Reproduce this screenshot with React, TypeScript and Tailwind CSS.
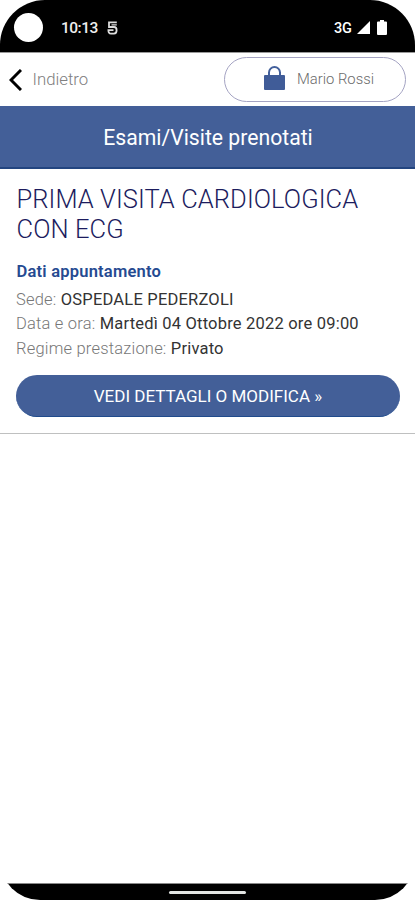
import React from 'react'

const StatusBar = () => (
  <div className="flex h-[52px] shrink-0 items-center bg-black pl-[14px] pr-[28px] pt-[3px] text-white">
    <div className="size-[29px] rounded-full bg-white"></div>
    <span className="ml-[18px] mt-[3px] text-[15.5px] font-medium tracking-[-0.5px] text-[#eee]">10:13</span>
    <svg className="ml-[9px] mt-px" width="11" height="14" viewBox="0 0 11 14" fill="none" stroke="#dcdcdc" strokeWidth="1.8">
      <path d="M9.8 1.4H2V6H7C8.8 6 9.6 7.4 9.6 9.3S8.8 12.6 7 12.6H4C2.2 12.6 1.4 11.4 1.4 9.2H6.5" />
      <path d="M4.5 3.8H9.8" strokeWidth="1.2" />
    </svg>
    <span className="ml-auto mt-[2px] text-[14.5px] font-medium">3G</span>
    <svg className="ml-[5px]" width="13" height="13" viewBox="0 0 13 13" fill="#fff">
      <path d="M13 0V13H0Z" />
    </svg>
    <svg className="ml-[7px]" width="10" height="15" viewBox="0 0 10 15" fill="#fff">
      <path d="M3 0H7V1.5H9A1 1 0 0 1 10 2.5V14A1 1 0 0 1 9 15H1A1 1 0 0 1 0 14V2.5A1 1 0 0 1 1 1.5H3Z" />
    </svg>
  </div>
)

const Navbar = () => (
  <header className="flex h-[54px] shrink-0 items-center justify-between border-t border-[#999] pl-[9px] pr-[9px]">
    <button className="flex items-center text-[#808080]">
      <svg width="13" height="22" viewBox="0 0 13 22" fill="none" stroke="#000" strokeWidth="3">
        <path d="M12 1L2 11L12 21" />
      </svg>
      <span className="ml-[10.5px] text-[16.8px] font-light">Indietro</span>
    </button>
    <button className="flex h-[45px] w-[182px] items-center rounded-full border border-[#a4a3c2] pl-[39px] text-[#6b6b6b]">
      <svg className="mb-[3px]" width="21" height="24" viewBox="0 0 21 24">
        <path d="M5 11V6.5A5.5 5.5 0 0 1 16 6.5V11" fill="none" stroke="#43609c" strokeWidth="2" />
        <rect y="9" width="21" height="15" rx="1" fill="#405c98" />
      </svg>
      <span className="ml-[12px] text-[14.8px] font-light">Mario Rossi</span>
    </button>
  </header>
)

const Appointment = () => (
  <article className="border-b border-[#bfc0c0] pl-4 pr-[15px] pb-4 pt-4">
    <h2 className="pl-[0.5px] text-[25.5px] leading-[29.5px] tracking-[0.08px] text-[#1c1c5e] font-light">
      PRIMA VISITA CARDIOLOGICA CON ECG
    </h2>
    <h3 className="mt-[16px] pl-[0.5px] text-[16.5px] leading-6 tracking-[0.22px] font-semibold text-[#254a91]">Dati appuntamento</h3>
    <div className="mt-[4px] text-[16.5px] leading-[24.3px] tracking-[0.2px] text-[#333]">
      <p><span className="font-light text-[#777]">Sede:</span> OSPEDALE PEDERZOLI</p>
      <p><span className="font-light text-[#777]">Data e ora:</span> Martedì 04 Ottobre 2022 ore 09:00</p>
      <p><span className="font-light text-[#777]">Regime prestazione:</span> Privato</p>
    </div>
    <button className="mt-[14px] h-[42px] w-full rounded-full border-b border-[#204b8c] bg-[#435f98] pt-[3px] text-[17px] text-white">
      VEDI DETTAGLI O MODIFICA »
    </button>
  </article>
)

const App = () => {
  return (
    <div className="h-[900px] w-full bg-white">
      <div className="flex h-full flex-col overflow-hidden rounded-t-[45px] rounded-b-[40px] bg-white font-['Roboto',sans-serif]">
        <StatusBar />
        <Navbar />
        <div className="flex h-[63px] shrink-0 items-center justify-center border-b-2 border-[#234580] bg-[#435f98] pl-px pt-[3px]">
          <h1 className="text-[21.2px] text-white">Esami/Visite prenotati</h1>
        </div>
        <main className="flex-1">
          <Appointment />
        </main>
        <div className="flex h-[17px] shrink-0 justify-center border-t border-[#888] bg-black pt-[7px]">
          <div className="h-[3px] w-[77px] rounded-full bg-[#e2e5e3]"></div>
        </div>
      </div>
    </div>
  )
}

export default App
